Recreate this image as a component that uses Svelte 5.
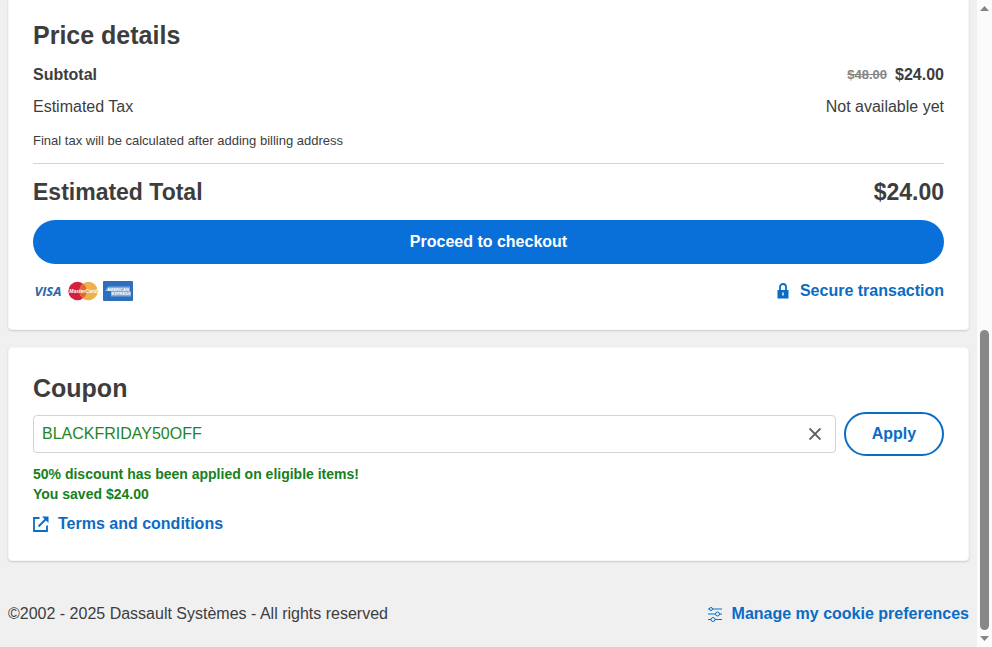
<script>
  let coupon = 'BLACKFRIDAY50OFF';

  function clearCoupon() {
    coupon = '';
  }
</script>

<div class="page">
  <div class="content">
    <section class="card price">
      <h2>Price details</h2>
      <div class="row subtotal">
        <span>Subtotal</span>
        <span class="amount"><s>$48.00</s> <b>$24.00</b></span>
      </div>
      <div class="row tax">
        <span>Estimated Tax</span>
        <span>Not available yet</span>
      </div>
      <p class="note">Final tax will be calculated after adding billing address</p>
      <div class="row total">
        <span>Estimated Total</span>
        <span>$24.00</span>
      </div>
      <button class="checkout" type="button">Proceed to checkout</button>
      <div class="row payment">
        <div class="brands">
          <svg width="30" height="22" viewBox="0 0 30 22" role="img" aria-label="Visa">
            <text x="15" y="16" text-anchor="middle" font-size="13" font-weight="bold" font-style="italic" font-family="Open Sans, sans-serif" fill="#2b66a8">VISA</text>
          </svg>
          <svg width="30" height="22" viewBox="0 0 30 22" role="img" aria-label="MasterCard">
            <circle cx="9.5" cy="11" r="9.2" fill="#d4213d" />
            <circle cx="20.5" cy="11" r="9.2" fill="#f0b04c" />
            <path d="M15 3.600a9.200 9.200 0 0 1 0 14.800a9.200 9.200 0 0 1 0-14.800z" fill="#e5653a" />
            <text x="15" y="13" text-anchor="middle" font-size="5" font-weight="bold" font-style="italic" font-family="Liberation Sans, sans-serif" fill="#fff">MasterCard</text>
          </svg>
          <svg width="30" height="22" viewBox="0 0 30 22" role="img" aria-label="American Express">
            <rect y="1" width="30" height="20" rx="1" fill="#2d6fbd" />
            <path d="M2 11 5 6.500h22V11h1v5.500H8V11z" fill="#7da9dc" />
            <text x="15" y="11" text-anchor="middle" font-size="4" font-weight="bold" font-family="Liberation Sans, sans-serif" fill="#fff">AMERICAN</text>
            <text x="18" y="15" text-anchor="middle" font-size="4" font-weight="bold" font-family="Liberation Sans, sans-serif" fill="#fff">EXPRESS</text>
          </svg>
        </div>
        <a class="link" href="#secure">
          <svg width="16" height="16" viewBox="0 0 16 16" aria-hidden="true">
            <path d="M5 7.500V4a3 3 0 0 1 6 0v3.500" fill="none" stroke="currentColor" stroke-width="1.800" />
            <path d="M2.500 7h11v8.500h-11zM7.300 9.500v3h1.400v-3z" fill="currentColor" fill-rule="evenodd" />
          </svg>
          Secure transaction
        </a>
      </div>
    </section>

    <section class="card coupon">
      <h2><label for="coupon">Coupon</label></h2>
      <form on:submit|preventDefault>
        <div class="field">
          <input id="coupon" type="text" bind:value={coupon} />
          <button class="clear" type="button" aria-label="Clear coupon" on:click={clearCoupon}>
            <svg width="12" height="12" viewBox="0 0 12 12" aria-hidden="true">
              <path d="M.500.500l11 11M11.500.500l-11 11" stroke="currentColor" stroke-width="1.900" />
            </svg>
          </button>
        </div>
        <button class="apply" type="submit">Apply</button>
      </form>
      <p class="success">50% discount has been applied on eligible items!<br />You saved $24.00</p>
      <a class="link" href="#terms">
        <svg width="16" height="16" viewBox="0 0 16 16" aria-hidden="true">
          <path d="M6.500 2H1v13h13V9.500M5.500 10.500 13.500 2.500" fill="none" stroke="currentColor" stroke-width="1.800" />
          <path d="M9 .500h6.500V7z" fill="currentColor" />
        </svg>
        Terms and conditions
      </a>
    </section>

    <footer>
      <span>©2002 - 2025 Dassault Systèmes - All rights reserved</span>
      <a class="link" href="#cookies">
        <svg width="16" height="16" viewBox="0 0 16 16" fill="none" stroke="currentColor" aria-hidden="true">
          <path d="M1 3h1.500M5.500 3H15M1 8h7.500M12.500 8H15M1 13.500h3M8 13.500h7" />
          <circle cx="4" cy="3" r="1.500" />
          <circle cx="10.500" cy="8" r="2" />
          <circle cx="6" cy="13.500" r="2" />
        </svg>
        Manage my cookie preferences
      </a>
    </footer>
  </div>

  <div class="scrollbar" aria-hidden="true">
    <svg width="9" height="5" viewBox="0 0 9 5"><path d="M0 5 4.500 0 9 5z" fill="#858585" /></svg>
    <div class="track"><div class="thumb"></div></div>
    <svg width="9" height="5" viewBox="0 0 9 5"><path d="M0 0 4.500 5 9 0z" fill="#858585" /></svg>
  </div>
</div>

<style>
  :global(body) {
    background: #f0f0f0;
    color: #3d3d3d;
    font-family: "Liberation Sans", Arial, sans-serif;
    font-size: 16px;
    line-height: 24px;
  }
  .page {
    display: grid;
    grid-template-columns: 1fr 15px;
    min-height: 100vh;
  }
  .content {
    padding: 0 8px;
  }
  .card {
    background: white;
    border: 1px solid #f6f6f6;
    border-radius: 4px;
    box-shadow: 0 1px 2px rgba(0, 0, 0, 0.15);
    padding: 24px;
  }
  .price {
    border-top: none;
    border-radius: 0 0 4px 4px;
    padding-top: 19px;
    padding-bottom: 26px;
  }
  .coupon {
    margin-top: 17px;
  }
  h2 {
    margin: 0 0 8px;
    font-size: 25px;
    line-height: 32px;
  }
  p {
    margin: 0;
    font-size: 13px;
    line-height: 20px;
  }
  .row, footer {
    display: flex;
    align-items: center;
    justify-content: space-between;
  }
  .subtotal {
    margin-top: 12px;
    margin-bottom: 8px;
    font-weight: bold;
  }
  .amount {
    display: flex;
    gap: 8px;
  }
  s {
    color: #868686;
    font-size: 13px;
  }
  .note {
    margin-top: 12px;
    padding-bottom: 12px;
    border-bottom: 1px solid #d1d4d4;
  }
  .total {
    margin: 12px 0;
    font-size: 23px;
    font-weight: bold;
    line-height: 32px;
  }
  button {
    cursor: pointer;
    font-family: inherit;
    font-size: 16px;
    font-weight: bold;
    height: 44px;
    border-radius: 22px;
  }
  .checkout {
    display: block;
    width: 100%;
    border: none;
    background: #0870d8;
    color: white;
  }
  .payment {
    margin-top: 15px;
  }
  .brands {
    display: flex;
    gap: 5px;
  }
  .link {
    display: inline-flex;
    align-items: center;
    gap: 9px;
    color: #0b6cc4;
    font-weight: bold;
    text-decoration: none;
  }
  form {
    display: flex;
    align-items: center;
    gap: 8px;
    margin-bottom: 8px;
  }
  .field {
    flex: 1;
    display: flex;
    height: 36px;
    border: 1px solid #d1d4d4;
    border-radius: 4px;
  }
  input {
    flex: 1;
    min-width: 0;
    padding: 0 8px;
    border: none;
    outline: none;
    background: none;
    color: #1f8524;
    font-family: inherit;
    font-size: 16px;
  }
  .clear {
    display: flex;
    align-items: center;
    justify-content: center;
    width: 41px;
    height: 36px;
    padding: 0;
    border: none;
    background: none;
    color: #5b5d5e;
  }
  .apply {
    width: 100px;
    border: 2px solid #0b6cc4;
    background: white;
    color: #0b6cc4;
  }
  .success {
    margin-bottom: 8px;
    color: #17801c;
    font-size: 14px;
    font-weight: bold;
  }
  .coupon .link {
    display: flex;
    width: fit-content;
  }
  footer {
    margin-top: 41px;
    padding-bottom: 20px;
  }
  .scrollbar {
    position: sticky;
    top: 0;
    display: flex;
    flex-direction: column;
    align-items: center;
    gap: 6px;
    box-sizing: border-box;
    height: 100vh;
    padding: 6px 0;
    background: #fbfbfb;
  }
  .track {
    flex: 1;
    display: flex;
    align-items: flex-end;
  }
  .thumb {
    width: 9px;
    height: 49%;
    border-radius: 5px;
    background: #888;
  }
</style>
